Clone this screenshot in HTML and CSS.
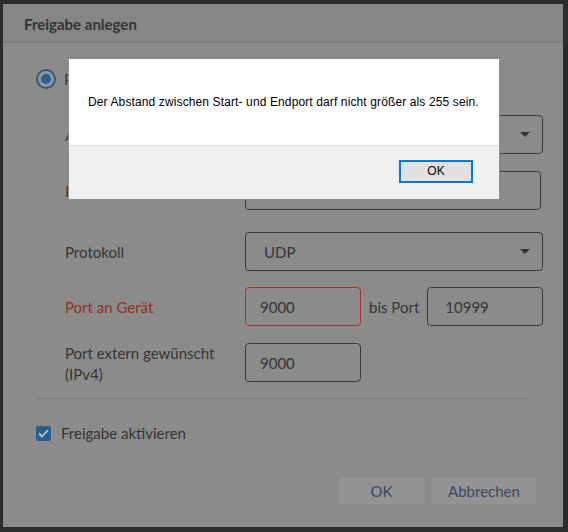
FILE: index.html
```html
<!DOCTYPE html>
<html lang="de">
<head>
<meta charset="utf-8">
<link rel="stylesheet" href="styles.css">
</head>
<body>
<div class="dialog">
  <div class="dlg-head">Freigabe anlegen</div>
  <div class="dlg-body">
    <div class="radio-row">
      <span class="radio"><span class="dot"></span></span>
      <span class="radio-label">Portfreigabe</span>
    </div>
    <div class="form">
      <div class="row r1">
        <span class="label">Anwendung</span>
        <div class="select wide"><span class="val"></span><span class="arrow"></span></div>
      </div>
      <div class="row r2">
        <span class="label">Bezeichnung</span>
        <div class="input wide2"></div>
      </div>
      <div class="row r3">
        <span class="label">Protokoll</span>
        <div class="select wide"><span class="val">UDP</span><span class="arrow"></span></div>
      </div>
      <div class="row r4">
        <span class="label err">Port an Gerät</span>
        <div class="pair">
          <div class="input small error"><span class="val">9000</span></div>
          <span class="bis">bis Port</span>
          <div class="input small"><span class="val">10999</span></div>
        </div>
      </div>
      <div class="row r5">
        <span class="label two">Port extern gewünscht<br>(IPv4)</span>
        <div class="input small"><span class="val">9000</span></div>
      </div>
    </div>
    <div class="sep"></div>
    <div class="check-row">
      <span class="check"><svg width="11" height="9" viewBox="0 0 11 9"><path d="M1 4.5 L4 7.5 L10 1.2" fill="none" stroke="#b9c4cf" stroke-width="1.8"/></svg></span>
      <span class="check-label">Freigabe aktivieren</span>
    </div>
    <div class="buttons">
      <span class="btn ok">OK</span>
      <span class="btn cancel">Abbrechen</span>
    </div>
  </div>
</div>
<div class="alert">
  <div class="alert-msg">Der Abstand zwischen Start- und Endport darf nicht größer als 255 sein.</div>
  <div class="alert-foot"><span class="alert-btn">OK</span></div>
</div>
</body>
</html>
```

FILE: styles.css
```css
* { box-sizing: border-box; }
html, body { margin: 0; padding: 0; }
body {
  width: 568px;
  height: 532px;
  background: #2c2c2c;
  font-family: Lato, "Noto Sans", sans-serif;
  color: #353535;
  overflow: hidden;
  position: relative;
}
.dialog {
  margin: 4px 5px 0 3px;
  height: 523px;
  background: #8b8b8b;
}
.dlg-head {
  height: 39px;
  background: #868686;
  border-bottom: 1px solid #7b7b7b;
  padding-left: 21px;
  font-weight: bold;
  font-size: 15px;
  line-height: 40px;
  color: #353535;
}
.dlg-body {
  padding: 26px 0 0 33px;
}
.radio-row {
  display: flex;
  align-items: center;
  height: 20px;
}
.radio {
  width: 20px;
  height: 20px;
  border-radius: 50%;
  border: 2px solid #3b5671;
  background: #8e969e;
  display: flex;
  align-items: center;
  justify-content: center;
}
.dot {
  width: 10px;
  height: 10px;
  border-radius: 50%;
  background: #2b5f90;
}
.radio-label {
  margin-left: 8px;
  font-size: 15px;
}
.form {
  padding-left: 29px;
}
.row {
  display: grid;
  grid-template-columns: 180px auto;
  grid-template-rows: 39px;
  align-items: center;
}
.r1 { margin-top: 26px; }
.r2 { margin-top: 17px; }
.r3 { margin-top: 22px; }
.r4 { margin-top: 16px; }
.r5 { margin-top: 17px; }
.label {
  font-size: 15px;
  color: #353535;
}
.label.err { color: #92321f; }
.label.two { line-height: 21px; margin-top: 2px; }
.select, .input {
  height: 39px;
  border: 1px solid #3a3a3a;
  border-radius: 4px;
  display: flex;
  align-items: center;
  font-size: 15px;
  color: #353535;
}
.wide { width: 298px; padding-left: 18px; justify-content: space-between; padding-right: 12px; }
.wide2 { width: 296px; }
.small { width: 116px; padding-left: 14px; }
.input.error { border-color: #a0342a; }
.arrow {
  width: 0;
  height: 0;
  border-left: 5px solid transparent;
  border-right: 5px solid transparent;
  border-top: 5px solid #333;
}
.pair {
  display: flex;
  align-items: center;
}
.bis {
  font-size: 15px;
  margin: 0 8px;
}
.r4 .input.small:last-child { padding-left: 17px; }
.sep {
  margin-top: 16px;
  width: 494px;
  height: 1px;
  background: #7c7c7c;
}
.check-row {
  display: flex;
  align-items: center;
  margin-top: 25px;
}
.check {
  width: 15px;
  height: 15px;
  border-radius: 2px;
  background: #2a5d8e;
  display: flex;
  align-items: center;
  justify-content: center;
}
.check-label {
  margin-left: 10px;
  font-size: 15px;
}
.buttons {
  display: flex;
  justify-content: flex-end;
  gap: 6px;
  margin-top: 35px;
  padding-right: 26px;
}
.btn {
  height: 28px;
  line-height: 27px;
  background: #939393;
  border: 1px solid #8e8e8e;
  border-radius: 2px;
  font-size: 15px;
  color: #3c4762;
  text-align: center;
}
.ok { width: 87px; }
.cancel { width: 106px; }

.alert {
  position: absolute;
  left: 68px;
  top: 58px;
  width: 432px;
  height: 142px;
  background: #fff;
  border: 1px solid #8f8f8f;
  font-family: "Liberation Sans", Arial, sans-serif;
  display: flex;
  flex-direction: column;
}
.alert-msg {
  height: 86px;
  padding: 36px 0 0 19px;
  font-size: 12px;
  letter-spacing: 0.12px;
  color: #000;
}
.alert-foot {
  flex: 1;
  background: #f0f0f0;
  border-top: 1px solid #dfdfdf;
  display: flex;
  justify-content: flex-end;
  padding: 14px 26px 0 0;
}
.alert-btn {
  width: 74px;
  height: 23px;
  border: 2px solid #0078d7;
  background: #e1e1e1;
  font-size: 12px;
  color: #000;
  text-align: center;
  line-height: 19px;
}
```
